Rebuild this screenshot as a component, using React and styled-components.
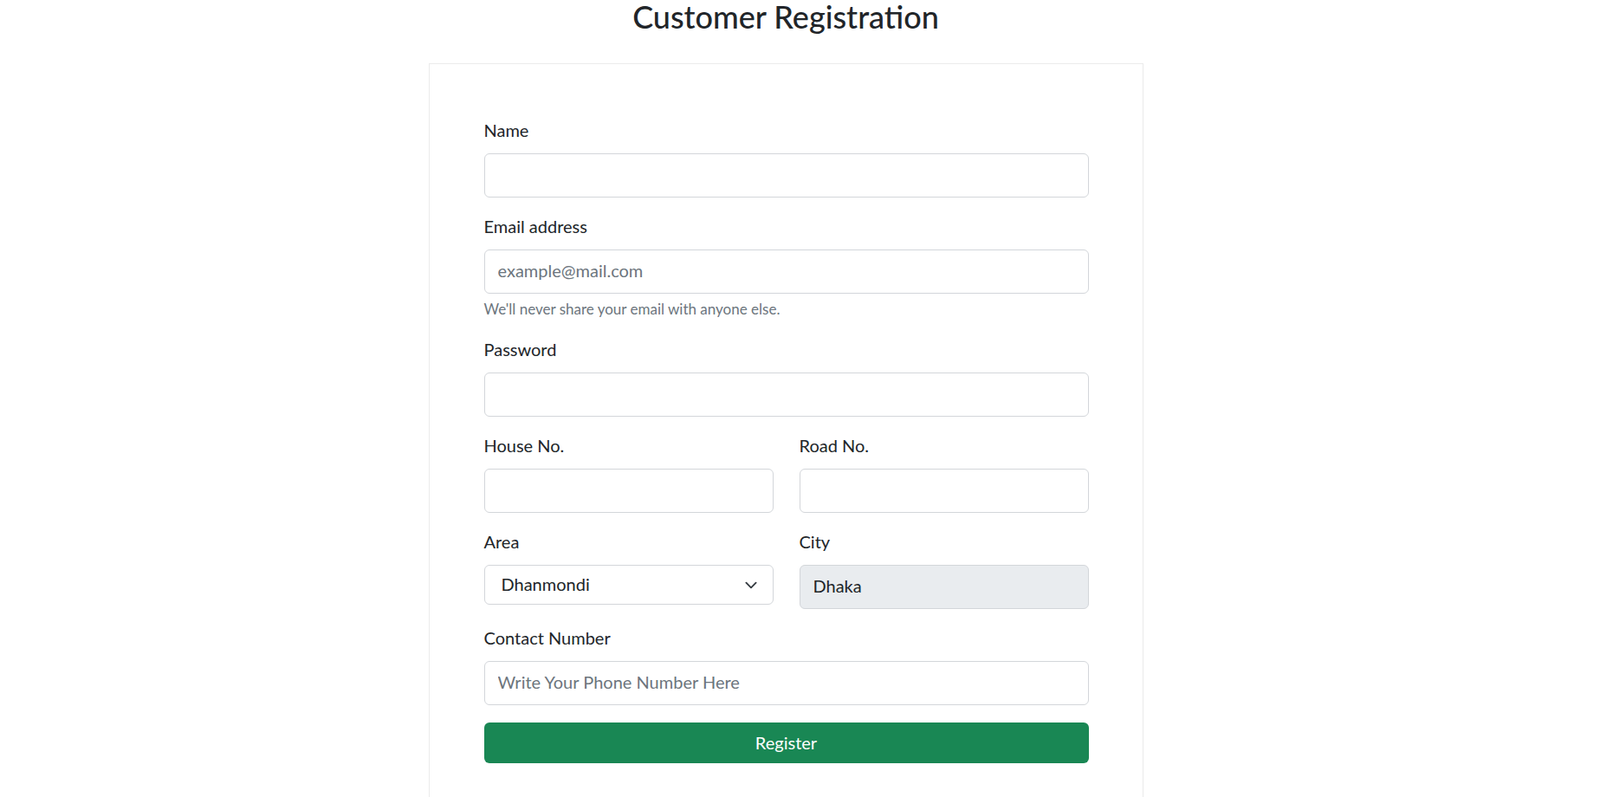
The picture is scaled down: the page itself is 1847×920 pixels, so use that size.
import React from "react";
import styled, { createGlobalStyle } from "styled-components";

const GlobalStyle = createGlobalStyle`
  body {
    margin: 0;
    background: #fff;
    color: #212529;
    font-family: Lato, "Open Sans", sans-serif;
  }
  * {
    box-sizing: border-box;
  }
`;

const Page = styled.div`
  display: flex;
  flex-direction: column;
  align-items: center;
  padding-right: 33px;
`;

const Title = styled.h2`
  margin: 1px 0 0;
  font-size: 36px;
  line-height: 36px;
  font-weight: 500;
  color: #212529;
`;

const Card = styled.div`
  width: 825px;
  margin-top: 36px;
  border: 1px solid #ebebeb;
  padding: 61px 62px 60px 63px;
`;

const Group = styled.div`
  margin-bottom: ${props => (props.last ? "20px" : "18px")};
`;

const Row = styled.div`
  display: grid;
  grid-template-columns: 1fr 1fr;
  column-gap: 30px;
`;

const Label = styled.label`
  display: block;
  font-size: 20px;
  line-height: 30px;
  margin-bottom: 12px;
  color: #212529;
`;

const Input = styled.input`
  display: block;
  width: 100%;
  height: 51px;
  padding: 0 15px 3px;
  font-family: inherit;
  font-size: 20px;
  color: #212529;
  background: ${props => (props.readOnly ? "#e9ecef" : "#fff")};
  border: 1px solid #d3d6da;
  border-radius: 6px;
  outline: none;
  &::placeholder {
    color: #6c757d;
  }
`;

const SelectWrap = styled.div`
  position: relative;
`;

const Select = styled.select`
  display: block;
  width: 100%;
  height: 46px;
  padding: 0 45px 2px 19px;
  font-family: inherit;
  font-size: 20px;
  color: #212529;
  background: #fff;
  border: 1px solid #d3d6da;
  border-radius: 6px;
  appearance: none;
  outline: none;
`;

const Chevron = styled.svg`
  position: absolute;
  right: 16px;
  top: 50%;
  width: 20px;
  height: 15px;
  margin-top: -7px;
  pointer-events: none;
`;

const Help = styled.div`
  margin-top: 5px;
  font-size: 17px;
  line-height: 26px;
  color: #6c757d;
`;

const Button = styled.button`
  display: block;
  width: 100%;
  height: 47px;
  padding: 0 0 2px;
  border: none;
  border-radius: 6px;
  background: #198754;
  color: #fff;
  font-family: inherit;
  font-size: 20px;
  cursor: pointer;
`;

const App = () => (
  <Page>
    <GlobalStyle />
    <Title>Customer Registration</Title>
    <Card>
      <form onSubmit={e => e.preventDefault()}>
        <Group>
          <Label>Name</Label>
          <Input type="text" />
        </Group>
        <Group>
          <Label>Email address</Label>
          <Input type="email" placeholder="example@mail.com" />
          <Help>We'll never share your email with anyone else.</Help>
        </Group>
        <Group>
          <Label>Password</Label>
          <Input type="password" />
        </Group>
        <Row>
          <Group>
            <Label>House No.</Label>
            <Input type="text" />
          </Group>
          <Group>
            <Label>Road No.</Label>
            <Input type="text" />
          </Group>
        </Row>
        <Row>
          <Group>
            <Label>Area</Label>
            <SelectWrap>
              <Select defaultValue="Dhanmondi">
                <option>Dhanmondi</option>
                <option>Gulshan</option>
                <option>Mirpur</option>
                <option>Uttara</option>
              </Select>
              <Chevron viewBox="0 0 16 16">
                <path
                  d="m2 5 6 6 6-6"
                  fill="none"
                  stroke="#343a40"
                  strokeWidth="2"
                  strokeLinecap="round"
                  strokeLinejoin="round"
                />
              </Chevron>
            </SelectWrap>
          </Group>
          <Group>
            <Label>City</Label>
            <Input type="text" value="Dhaka" readOnly />
          </Group>
        </Row>
        <Group last>
          <Label>Contact Number</Label>
          <Input type="text" placeholder="Write Your Phone Number Here" />
        </Group>
        <Button type="submit">Register</Button>
      </form>
    </Card>
  </Page>
);

export default App;
